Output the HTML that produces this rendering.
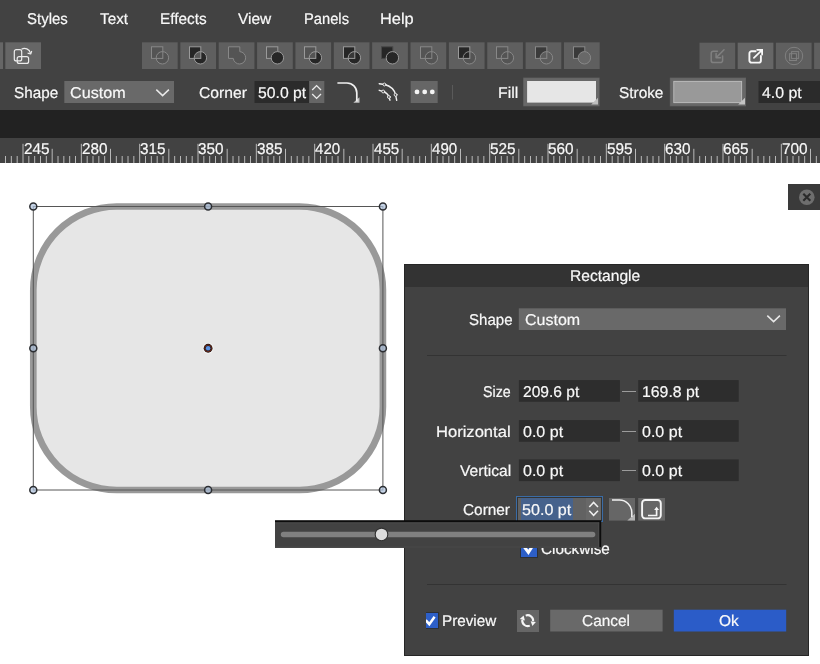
<!DOCTYPE html>
<html><head><meta charset="utf-8">
<style>
*{margin:0;padding:0;box-sizing:border-box}
html,body{width:820px;height:664px;overflow:hidden;background:#fff}
body{font-family:"Liberation Sans",sans-serif;color:#f0f0f0;font-size:15px;position:relative}
.a{position:absolute}
.t{position:absolute;white-space:nowrap;line-height:20px;height:20px;-webkit-text-stroke:0.2px currentColor;transform-origin:0 0;text-rendering:geometricPrecision}
svg{position:absolute;overflow:visible}
</style></head><body>
<div id="root" style="position:absolute;left:0;top:0;width:820px;height:664px;overflow:hidden;will-change:transform">

<div class="a" style="left:0px;top:0px;width:820px;height:110px;background:#424242;"></div>
<div class="a" style="left:0px;top:110px;width:820px;height:28px;background:#222;"></div>
<div class="a" style="left:0px;top:138px;width:820px;height:25px;background:#424242;"></div>
<span class="t" id="t0" style="left:26.98px;top:10px;font-size:15.6px;color:#f8f8f8;transform:scaleX(0.9600)">Styles</span>
<span class="t" id="t1" style="left:100.02px;top:10px;font-size:15.6px;color:#f8f8f8;transform:scaleX(0.9793)">Text</span>
<span class="t" id="t2" style="left:159.72px;top:10px;font-size:15.6px;color:#f8f8f8;transform:scaleX(0.9827)">Effects</span>
<span class="t" id="t3" style="left:238.22px;top:10px;font-size:15.6px;color:#f8f8f8;transform:scaleX(0.9932)">View</span>
<span class="t" id="t4" style="left:303.66px;top:10px;font-size:15.6px;color:#f8f8f8;transform:scaleX(0.9435)">Panels</span>
<span class="t" id="t5" style="left:380.45px;top:10px;font-size:15.6px;color:#f8f8f8;transform:scaleX(1.0508)">Help</span>
<svg style="left:0px;top:42px" width="3" height="27" viewBox="0 42 3 27"><rect x="0.00" y="42.30" width="3.00" height="26.70" fill="#666"/></svg>
<svg style="left:5px;top:42px" width="36" height="27" viewBox="5 42 36 27"><rect x="5.30" y="42.30" width="35.70" height="26.70" fill="#666"/></svg>
<svg style="left:5px;top:43px" width="36" height="26" viewBox="0 0 36 26" fill="none" stroke="#ececec" stroke-width="1.2">
<rect x="9.3" y="6.7" width="7.4" height="11.2" rx="2"/><rect x="12.2" y="13.6" width="11.4" height="6.8" rx="2"/>
<path d="M16.5 6.2 C20 4.3 24.3 6 25.6 10.3" /><path d="M22.6 10.2 L25.7 11 L26.7 8" stroke-linejoin="round"/>
</svg>
<svg style="left:142px;top:42px" width="36" height="27" viewBox="142 42 36 27"><rect x="142.00" y="42.30" width="35.70" height="26.70" fill="#5f5f5f"/></svg>
<svg style="left:180px;top:42px" width="37" height="27" viewBox="180 42 37 27"><rect x="180.36" y="42.30" width="35.70" height="26.70" fill="#5f5f5f"/></svg>
<svg style="left:218px;top:42px" width="37" height="27" viewBox="218 42 37 27"><rect x="218.72" y="42.30" width="35.70" height="26.70" fill="#5f5f5f"/></svg>
<svg style="left:257px;top:42px" width="36" height="27" viewBox="257 42 36 27"><rect x="257.08" y="42.30" width="35.70" height="26.70" fill="#5f5f5f"/></svg>
<svg style="left:295px;top:42px" width="37" height="27" viewBox="295 42 37 27"><rect x="295.44" y="42.30" width="35.70" height="26.70" fill="#5f5f5f"/></svg>
<svg style="left:333px;top:42px" width="37" height="27" viewBox="333 42 37 27"><rect x="333.80" y="42.30" width="35.70" height="26.70" fill="#5f5f5f"/></svg>
<svg style="left:372px;top:42px" width="36" height="27" viewBox="372 42 36 27"><rect x="372.16" y="42.30" width="35.70" height="26.70" fill="#5f5f5f"/></svg>
<svg style="left:410px;top:42px" width="37" height="27" viewBox="410 42 37 27"><rect x="410.52" y="42.30" width="35.70" height="26.70" fill="#5f5f5f"/></svg>
<svg style="left:448px;top:42px" width="37" height="27" viewBox="448 42 37 27"><rect x="448.88" y="42.30" width="35.70" height="26.70" fill="#5f5f5f"/></svg>
<svg style="left:487px;top:42px" width="36" height="27" viewBox="487 42 36 27"><rect x="487.24" y="42.30" width="35.70" height="26.70" fill="#5f5f5f"/></svg>
<svg style="left:525px;top:42px" width="37" height="27" viewBox="525 42 37 27"><rect x="525.60" y="42.30" width="35.70" height="26.70" fill="#5f5f5f"/></svg>
<svg style="left:563px;top:42px" width="37" height="27" viewBox="563 42 37 27"><rect x="563.96" y="42.30" width="35.70" height="26.70" fill="#5f5f5f"/></svg>
<svg style="left:142.0px;top:43px" width="36" height="26" viewBox="0 0 36 26"><defs><clipPath id="c142"><circle cx="20.4" cy="14.8" r="6.2"/></clipPath></defs><circle cx="20.4" cy="14.8" r="6.2" fill="#545454"/><rect x="9.5" y="3.8" width="11.3" height="11.6" fill="#545454"/><rect x="9.5" y="3.8" width="11.3" height="11.6" fill="none" stroke="#888" stroke-width="1"/><circle cx="20.4" cy="14.8" r="6.2" fill="none" stroke="#888" stroke-width="1"/></svg>
<svg style="left:180.36px;top:43px" width="36" height="26" viewBox="0 0 36 26"><defs><clipPath id="c180"><circle cx="20.4" cy="14.8" r="6.2"/></clipPath></defs><circle cx="20.4" cy="14.8" r="6.2" fill="#262626"/><rect x="9.5" y="3.8" width="11.3" height="11.6" fill="#262626"/><rect x="9.5" y="3.8" width="11.3" height="11.6" fill="#585858" clip-path="url(#c180)"/><rect x="9.5" y="3.8" width="11.3" height="11.6" fill="none" stroke="#9a9a9a" stroke-width="1"/><circle cx="20.4" cy="14.8" r="6.2" fill="none" stroke="#9a9a9a" stroke-width="1"/></svg>
<svg style="left:218.72px;top:43px" width="36" height="26" viewBox="0 0 36 26"><path d="M9.5 3.8 H20.8 V8.61 A6.2 6.2 0 1 1 14.27 15.4 H9.5 Z" fill="#545454" stroke="#888" stroke-width="1"/></svg>
<svg style="left:257.08px;top:43px" width="36" height="26" viewBox="0 0 36 26"><defs><clipPath id="c257"><circle cx="20.4" cy="14.8" r="6.2"/></clipPath></defs><rect x="9.5" y="3.8" width="11.3" height="11.6" fill="#545454"/><rect x="9.5" y="3.8" width="11.3" height="11.6" fill="none" stroke="#9a9a9a" stroke-width="1"/><circle cx="20.4" cy="14.8" r="6.2" fill="#262626"/><circle cx="20.4" cy="14.8" r="6.2" fill="none" stroke="#9a9a9a" stroke-width="1"/></svg>
<svg style="left:295.44px;top:43px" width="36" height="26" viewBox="0 0 36 26"><defs><clipPath id="c295"><circle cx="20.4" cy="14.8" r="6.2"/></clipPath></defs><rect x="9.5" y="3.8" width="11.3" height="11.6" fill="#545454"/><circle cx="20.4" cy="14.8" r="6.2" fill="#262626"/><rect x="9.5" y="3.8" width="11.3" height="11.6" fill="#545454" clip-path="url(#c295)"/><rect x="9.5" y="3.8" width="11.3" height="11.6" fill="none" stroke="#9a9a9a" stroke-width="1"/><circle cx="20.4" cy="14.8" r="6.2" fill="none" stroke="#9a9a9a" stroke-width="1"/></svg>
<svg style="left:333.8px;top:43px" width="36" height="26" viewBox="0 0 36 26"><defs><clipPath id="c333"><circle cx="20.4" cy="14.8" r="6.2"/></clipPath></defs><rect x="9.5" y="3.8" width="11.3" height="11.6" fill="#262626"/><circle cx="20.4" cy="14.8" r="6.2" fill="#262626"/><rect x="9.5" y="3.8" width="11.3" height="11.6" fill="#383838" clip-path="url(#c333)"/><rect x="9.5" y="3.8" width="11.3" height="11.6" fill="none" stroke="#9a9a9a" stroke-width="1"/><circle cx="20.4" cy="14.8" r="6.2" fill="none" stroke="#9a9a9a" stroke-width="1"/></svg>
<svg style="left:372.16px;top:43px" width="36" height="26" viewBox="0 0 36 26"><defs><clipPath id="c372"><circle cx="20.4" cy="14.8" r="6.2"/></clipPath></defs><rect x="9.5" y="3.8" width="11.3" height="11.6" fill="#262626"/><rect x="9.5" y="3.8" width="11.3" height="11.6" fill="none" stroke="#484848" stroke-width="1"/><circle cx="20.4" cy="14.8" r="6.2" fill="#262626"/><circle cx="20.4" cy="14.8" r="6.2" fill="none" stroke="#9a9a9a" stroke-width="1"/></svg>
<svg style="left:410.52px;top:43px" width="36" height="26" viewBox="0 0 36 26"><defs><clipPath id="c410"><circle cx="20.4" cy="14.8" r="6.2"/></clipPath></defs><rect x="9.5" y="3.8" width="11.3" height="11.6" fill="#545454"/><circle cx="20.4" cy="14.8" r="6.2" fill="#545454"/><rect x="9.5" y="3.8" width="11.3" height="11.6" fill="#505050" clip-path="url(#c410)"/><rect x="9.5" y="3.8" width="11.3" height="11.6" fill="none" stroke="#888" stroke-width="1"/><circle cx="20.4" cy="14.8" r="6.2" fill="none" stroke="#888" stroke-width="1"/></svg>
<svg style="left:448.88px;top:43px" width="36" height="26" viewBox="0 0 36 26"><defs><clipPath id="c448"><circle cx="20.4" cy="14.8" r="6.2"/></clipPath></defs><circle cx="20.4" cy="14.8" r="6.2" fill="#545454"/><rect x="9.5" y="3.8" width="11.3" height="11.6" fill="#262626"/><rect x="9.5" y="3.8" width="11.3" height="11.6" fill="#262626" clip-path="url(#c448)"/><rect x="9.5" y="3.8" width="11.3" height="11.6" fill="none" stroke="#9a9a9a" stroke-width="1"/><circle cx="20.4" cy="14.8" r="6.2" fill="none" stroke="#888" stroke-width="1"/></svg>
<svg style="left:487.24px;top:43px" width="36" height="26" viewBox="0 0 36 26"><defs><clipPath id="c487"><circle cx="20.4" cy="14.8" r="6.2"/></clipPath></defs><rect x="9.5" y="3.8" width="11.3" height="11.6" fill="#545454"/><circle cx="20.4" cy="14.8" r="6.2" fill="#545454"/><rect x="9.5" y="3.8" width="11.3" height="11.6" fill="none" stroke="#888" stroke-width="1"/><circle cx="20.4" cy="14.8" r="6.2" fill="none" stroke="#888" stroke-width="1"/></svg>
<svg style="left:525.6px;top:43px" width="36" height="26" viewBox="0 0 36 26"><defs><clipPath id="c525"><circle cx="20.4" cy="14.8" r="6.2"/></clipPath></defs><rect x="9.5" y="3.8" width="11.3" height="11.6" fill="#3a3a3a"/><circle cx="20.4" cy="14.8" r="6.2" fill="#5c5c5c"/><rect x="9.5" y="3.8" width="11.3" height="11.6" fill="none" stroke="#888" stroke-width="1"/><circle cx="20.4" cy="14.8" r="6.2" fill="none" stroke="#888" stroke-width="1"/></svg>
<svg style="left:563.96px;top:43px" width="36" height="26" viewBox="0 0 36 26"><defs><clipPath id="c563"><circle cx="20.4" cy="14.8" r="6.2"/></clipPath></defs><rect x="9.5" y="3.8" width="11.3" height="11.6" fill="#3a3a3a"/><rect x="9.5" y="3.8" width="11.3" height="11.6" fill="none" stroke="#888" stroke-width="1"/><circle cx="20.4" cy="14.8" r="6.2" fill="#686868"/><circle cx="20.4" cy="14.8" r="6.2" fill="none" stroke="#888" stroke-width="1"/></svg>
<svg style="left:699px;top:42px" width="37" height="27" viewBox="699 42 37 27"><rect x="699.50" y="42.70" width="35.70" height="26.30" fill="#5f5f5f"/></svg>
<svg style="left:737px;top:42px" width="37" height="27" viewBox="737 42 37 27"><rect x="737.70" y="42.70" width="35.70" height="26.30" fill="#666"/></svg>
<svg style="left:775px;top:42px" width="37" height="27" viewBox="775 42 37 27"><rect x="775.90" y="42.70" width="35.70" height="26.30" fill="#5f5f5f"/></svg>
<svg style="left:814px;top:42px" width="36" height="27" viewBox="814 42 36 27"><rect x="814.10" y="42.70" width="35.70" height="26.30" fill="#5f5f5f"/></svg>
<svg style="left:699.5px;top:43px" width="36" height="26" viewBox="0 0 36 26" fill="none" stroke="#808080" stroke-width="1.5" stroke-linecap="round" stroke-linejoin="round">
<path d="M17.4 8.3 H13.4 A2.2 2.2 0 0 0 11.2 10.5 V17.4 A2.2 2.2 0 0 0 13.4 19.6 H20.4 A2.2 2.2 0 0 0 22.6 17.4 V13"/>
<path d="M24 6.8 L16.4 14.5 M16.1 10.4 V14.8 H20.5"/></svg>
<svg style="left:737.7px;top:43px" width="36" height="26" viewBox="0 0 36 26" fill="none" stroke="#f8f8f8" stroke-width="1.9" stroke-linecap="round" stroke-linejoin="round">
<path d="M17.6 8.3 H13.6 A2.2 2.2 0 0 0 11.4 10.5 V17.4 A2.2 2.2 0 0 0 13.6 19.6 H20.7 A2.2 2.2 0 0 0 22.9 17.4 V13"/>
<path d="M15.9 14.9 L23.4 7.6" stroke-width="1.7"/><path d="M19.2 6.8 H24.1 V11.6" stroke-width="1.8" stroke-linejoin="miter"/><path d="M21 6.8 H24.1 V9.9 Z" fill="#f8f8f8" stroke="none"/></svg>
<svg style="left:775.9px;top:43px" width="36" height="26" viewBox="0 0 36 26" fill="none" stroke="#808080" stroke-width="1">
<circle cx="18" cy="13" r="8.7"/><rect x="15.6" y="10.7" width="4.8" height="4.5" fill="#565656" stroke="none"/><rect x="15.6" y="8.6" width="7" height="6.8"/><rect x="13.6" y="10.7" width="6.8" height="6.8"/></svg>
<span class="t" id="t6" style="left:14.37px;top:84px;font-size:15.6px;color:#f8f8f8;transform:scaleX(0.9785)">Shape</span>
<svg style="left:64px;top:81px" width="110" height="22" viewBox="64 81 110 22"><rect x="64.30" y="81.00" width="109.70" height="22.00" fill="#696969"/></svg>
<span class="t" id="t7" style="left:70.22px;top:84px;font-size:15.6px;color:#f8f8f8;transform:scaleX(1.0354)">Custom</span>
<svg style="left:155px;top:88px" width="16" height="10" viewBox="0 0 16 10" fill="none" stroke="#e8e8e8" stroke-width="1.5"><path d="M1.3 1.6 L7.6 7.6 L13.9 1.6"/></svg>
<span class="t" id="t8" style="left:199.44px;top:84px;font-size:15.6px;color:#f8f8f8;transform:scaleX(1.0049)">Corner</span>
<svg style="left:254px;top:81px" width="56" height="22" viewBox="254 81 56 22"><rect x="254.50" y="81.00" width="54.70" height="22.00" fill="#2b2b2b"/></svg>
<svg style="left:309px;top:81px" width="16" height="22" viewBox="309 81 16 22"><rect x="309.20" y="81.00" width="15.10" height="22.00" fill="#666"/></svg>
<span class="t" id="t9" style="left:257.98px;top:84px;font-size:15.6px;color:#f8f8f8;transform:scaleX(1.0093)">50.0 pt</span>
<svg style="left:309.2px;top:81px" width="15" height="22" viewBox="0 0 15 22" fill="none" stroke="#ececec" stroke-width="1.3"><path d="M3.2 9 L7.6 4.6 L12 9 M3.2 13 L7.6 17.4 L12 13"/></svg>
<svg style="left:330px;top:78px" width="36" height="30" viewBox="0 0 36 30" fill="none">
<path d="M23.3 24.8 H29.5 V19.2 Z" fill="#c4c4c4"/>
<path d="M7.4 5 H17 A9.8 9.8 0 0 1 26.8 14.8 V23.6" stroke="#f0f0f0" stroke-width="1.7"/></svg>
<svg style="left:370px;top:78px" width="36" height="30" viewBox="0 0 36 30" fill="none" stroke="#f0f0f0" stroke-width="1.4" stroke-linecap="round">
<path d="M9.2 5.7 L14.5 6.5 C20.5 8 24.5 12 25.6 16.8 L26.7 22.4"/><path d="M9.2 12.3 L13.2 13.5 C16 14.6 18.2 16.6 18.9 19 L20 22.2"/>
<g fill="#4a4a4a" stroke-width="0.9"><circle cx="14.5" cy="6.5" r="1.45"/><circle cx="25.6" cy="16.8" r="1.45"/><circle cx="13.2" cy="13.5" r="1.45"/><circle cx="18.9" cy="19" r="1.45"/></g></svg>
<svg style="left:410px;top:81px" width="28" height="22" viewBox="410 81 28 22"><rect x="410.70" y="81.00" width="27.00" height="22.00" fill="#666"/></svg>
<svg style="left:410.7px;top:81px" width="27" height="22" viewBox="0 0 27 22" fill="#f4f4f4"><circle cx="6" cy="10.9" r="2.4"/><circle cx="13.7" cy="10.9" r="2.4"/><circle cx="21.3" cy="10.9" r="2.4"/></svg>
<svg style="left:452px;top:85px" width="1" height="15" viewBox="452 85 1 15"><rect x="452.00" y="85.00" width="1.00" height="14.50" fill="#5a5a5a"/></svg>
<span class="t" id="t10" style="left:497.69px;top:84px;font-size:15.6px;color:#f8f8f8;transform:scaleX(1.0111)">Fill</span>
<svg style="left:523px;top:77px" width="77" height="30" viewBox="523 77 77 30"><rect x="523.20" y="77.60" width="76.40" height="28.70" fill="#606060"/></svg>
<svg style="left:523px;top:78px" width="76" height="28" viewBox="523 78 76 28"><rect x="523.80" y="78.20" width="75.20" height="27.50" fill="#686868"/></svg>
<svg style="left:527px;top:81px" width="69" height="22" viewBox="527 81 69 22"><rect x="527.10" y="81.00" width="68.90" height="21.60" fill="#e6e6e6"/></svg>
<svg style="left:590px;top:96px" width="10" height="10" viewBox="0 0 10 10"><path d="M1.2 8.6 H8 V1.8 Z" fill="#bebebe"/></svg>
<span class="t" id="t11" style="left:618.87px;top:84px;font-size:15.6px;color:#f8f8f8;transform:scaleX(0.9853)">Stroke</span>
<svg style="left:669px;top:77px" width="77" height="30" viewBox="669 77 77 30"><rect x="669.80" y="77.60" width="76.20" height="28.70" fill="#606060"/></svg>
<svg style="left:670px;top:78px" width="76" height="28" viewBox="670 78 76 28"><rect x="670.40" y="78.20" width="75.00" height="27.50" fill="#686868"/></svg>
<svg style="left:673px;top:80px" width="70" height="24" viewBox="673 80 70 24"><rect x="673.30" y="80.90" width="68.80" height="22.20" fill="#bcbcbc"/></svg>
<svg style="left:674px;top:81px" width="68" height="22" viewBox="674 81 68 22"><rect x="674.20" y="81.80" width="67.00" height="20.40" fill="#999"/></svg>
<svg style="left:736.5px;top:96px" width="10" height="10" viewBox="0 0 10 10"><path d="M1.2 8.6 H8 V1.8 Z" fill="#c4c4c4"/></svg>
<svg style="left:758px;top:81px" width="63" height="22" viewBox="758 81 63 22"><rect x="758.50" y="81.00" width="62.00" height="22.00" fill="#2b2b2b"/></svg>
<span class="t" id="t12" style="left:762.19px;top:84px;font-size:15.6px;color:#f8f8f8;transform:scaleX(1.0156)">4.0 pt</span>
<svg style="left:0;top:138px" width="820" height="25" viewBox="0 0 820 25"><rect x="5.00" y="18" width="1" height="7" fill="#b8b8b8"/><rect x="10.83" y="18" width="1" height="7" fill="#b8b8b8"/><rect x="16.67" y="18" width="1" height="7" fill="#b8b8b8"/><rect x="22.50" y="5.8" width="1" height="19.2" fill="#b8b8b8"/><rect x="28.33" y="18" width="1" height="7" fill="#b8b8b8"/><rect x="34.17" y="18" width="1" height="7" fill="#b8b8b8"/><rect x="40.00" y="18" width="1" height="7" fill="#b8b8b8"/><rect x="45.83" y="18" width="1" height="7" fill="#b8b8b8"/><rect x="51.67" y="10.8" width="1" height="14.2" fill="#b8b8b8"/><rect x="57.50" y="18" width="1" height="7" fill="#b8b8b8"/><rect x="63.33" y="18" width="1" height="7" fill="#b8b8b8"/><rect x="69.17" y="18" width="1" height="7" fill="#b8b8b8"/><rect x="75.00" y="18" width="1" height="7" fill="#b8b8b8"/><rect x="80.83" y="5.8" width="1" height="19.2" fill="#b8b8b8"/><rect x="86.67" y="18" width="1" height="7" fill="#b8b8b8"/><rect x="92.50" y="18" width="1" height="7" fill="#b8b8b8"/><rect x="98.33" y="18" width="1" height="7" fill="#b8b8b8"/><rect x="104.17" y="18" width="1" height="7" fill="#b8b8b8"/><rect x="110.00" y="10.8" width="1" height="14.2" fill="#b8b8b8"/><rect x="115.83" y="18" width="1" height="7" fill="#b8b8b8"/><rect x="121.67" y="18" width="1" height="7" fill="#b8b8b8"/><rect x="127.50" y="18" width="1" height="7" fill="#b8b8b8"/><rect x="133.33" y="18" width="1" height="7" fill="#b8b8b8"/><rect x="139.17" y="5.8" width="1" height="19.2" fill="#b8b8b8"/><rect x="145.00" y="18" width="1" height="7" fill="#b8b8b8"/><rect x="150.83" y="18" width="1" height="7" fill="#b8b8b8"/><rect x="156.67" y="18" width="1" height="7" fill="#b8b8b8"/><rect x="162.50" y="18" width="1" height="7" fill="#b8b8b8"/><rect x="168.33" y="10.8" width="1" height="14.2" fill="#b8b8b8"/><rect x="174.17" y="18" width="1" height="7" fill="#b8b8b8"/><rect x="180.00" y="18" width="1" height="7" fill="#b8b8b8"/><rect x="185.83" y="18" width="1" height="7" fill="#b8b8b8"/><rect x="191.67" y="18" width="1" height="7" fill="#b8b8b8"/><rect x="197.50" y="5.8" width="1" height="19.2" fill="#b8b8b8"/><rect x="203.33" y="18" width="1" height="7" fill="#b8b8b8"/><rect x="209.17" y="18" width="1" height="7" fill="#b8b8b8"/><rect x="215.00" y="18" width="1" height="7" fill="#b8b8b8"/><rect x="220.83" y="18" width="1" height="7" fill="#b8b8b8"/><rect x="226.67" y="10.8" width="1" height="14.2" fill="#b8b8b8"/><rect x="232.50" y="18" width="1" height="7" fill="#b8b8b8"/><rect x="238.33" y="18" width="1" height="7" fill="#b8b8b8"/><rect x="244.17" y="18" width="1" height="7" fill="#b8b8b8"/><rect x="250.00" y="18" width="1" height="7" fill="#b8b8b8"/><rect x="255.83" y="5.8" width="1" height="19.2" fill="#b8b8b8"/><rect x="261.67" y="18" width="1" height="7" fill="#b8b8b8"/><rect x="267.50" y="18" width="1" height="7" fill="#b8b8b8"/><rect x="273.33" y="18" width="1" height="7" fill="#b8b8b8"/><rect x="279.17" y="18" width="1" height="7" fill="#b8b8b8"/><rect x="285.00" y="10.8" width="1" height="14.2" fill="#b8b8b8"/><rect x="290.83" y="18" width="1" height="7" fill="#b8b8b8"/><rect x="296.67" y="18" width="1" height="7" fill="#b8b8b8"/><rect x="302.50" y="18" width="1" height="7" fill="#b8b8b8"/><rect x="308.33" y="18" width="1" height="7" fill="#b8b8b8"/><rect x="314.17" y="5.8" width="1" height="19.2" fill="#b8b8b8"/><rect x="320.00" y="18" width="1" height="7" fill="#b8b8b8"/><rect x="325.83" y="18" width="1" height="7" fill="#b8b8b8"/><rect x="331.67" y="18" width="1" height="7" fill="#b8b8b8"/><rect x="337.50" y="18" width="1" height="7" fill="#b8b8b8"/><rect x="343.33" y="10.8" width="1" height="14.2" fill="#b8b8b8"/><rect x="349.17" y="18" width="1" height="7" fill="#b8b8b8"/><rect x="355.00" y="18" width="1" height="7" fill="#b8b8b8"/><rect x="360.83" y="18" width="1" height="7" fill="#b8b8b8"/><rect x="366.67" y="18" width="1" height="7" fill="#b8b8b8"/><rect x="372.50" y="5.8" width="1" height="19.2" fill="#b8b8b8"/><rect x="378.33" y="18" width="1" height="7" fill="#b8b8b8"/><rect x="384.17" y="18" width="1" height="7" fill="#b8b8b8"/><rect x="390.00" y="18" width="1" height="7" fill="#b8b8b8"/><rect x="395.83" y="18" width="1" height="7" fill="#b8b8b8"/><rect x="401.67" y="10.8" width="1" height="14.2" fill="#b8b8b8"/><rect x="407.50" y="18" width="1" height="7" fill="#b8b8b8"/><rect x="413.33" y="18" width="1" height="7" fill="#b8b8b8"/><rect x="419.17" y="18" width="1" height="7" fill="#b8b8b8"/><rect x="425.00" y="18" width="1" height="7" fill="#b8b8b8"/><rect x="430.83" y="5.8" width="1" height="19.2" fill="#b8b8b8"/><rect x="436.67" y="18" width="1" height="7" fill="#b8b8b8"/><rect x="442.50" y="18" width="1" height="7" fill="#b8b8b8"/><rect x="448.33" y="18" width="1" height="7" fill="#b8b8b8"/><rect x="454.17" y="18" width="1" height="7" fill="#b8b8b8"/><rect x="460.00" y="10.8" width="1" height="14.2" fill="#b8b8b8"/><rect x="465.83" y="18" width="1" height="7" fill="#b8b8b8"/><rect x="471.67" y="18" width="1" height="7" fill="#b8b8b8"/><rect x="477.50" y="18" width="1" height="7" fill="#b8b8b8"/><rect x="483.33" y="18" width="1" height="7" fill="#b8b8b8"/><rect x="489.17" y="5.8" width="1" height="19.2" fill="#b8b8b8"/><rect x="495.00" y="18" width="1" height="7" fill="#b8b8b8"/><rect x="500.83" y="18" width="1" height="7" fill="#b8b8b8"/><rect x="506.67" y="18" width="1" height="7" fill="#b8b8b8"/><rect x="512.50" y="18" width="1" height="7" fill="#b8b8b8"/><rect x="518.33" y="10.8" width="1" height="14.2" fill="#b8b8b8"/><rect x="524.17" y="18" width="1" height="7" fill="#b8b8b8"/><rect x="530.00" y="18" width="1" height="7" fill="#b8b8b8"/><rect x="535.83" y="18" width="1" height="7" fill="#b8b8b8"/><rect x="541.67" y="18" width="1" height="7" fill="#b8b8b8"/><rect x="547.50" y="5.8" width="1" height="19.2" fill="#b8b8b8"/><rect x="553.33" y="18" width="1" height="7" fill="#b8b8b8"/><rect x="559.17" y="18" width="1" height="7" fill="#b8b8b8"/><rect x="565.00" y="18" width="1" height="7" fill="#b8b8b8"/><rect x="570.83" y="18" width="1" height="7" fill="#b8b8b8"/><rect x="576.67" y="10.8" width="1" height="14.2" fill="#b8b8b8"/><rect x="582.50" y="18" width="1" height="7" fill="#b8b8b8"/><rect x="588.33" y="18" width="1" height="7" fill="#b8b8b8"/><rect x="594.17" y="18" width="1" height="7" fill="#b8b8b8"/><rect x="600.00" y="18" width="1" height="7" fill="#b8b8b8"/><rect x="605.83" y="5.8" width="1" height="19.2" fill="#b8b8b8"/><rect x="611.67" y="18" width="1" height="7" fill="#b8b8b8"/><rect x="617.50" y="18" width="1" height="7" fill="#b8b8b8"/><rect x="623.33" y="18" width="1" height="7" fill="#b8b8b8"/><rect x="629.17" y="18" width="1" height="7" fill="#b8b8b8"/><rect x="635.00" y="10.8" width="1" height="14.2" fill="#b8b8b8"/><rect x="640.83" y="18" width="1" height="7" fill="#b8b8b8"/><rect x="646.67" y="18" width="1" height="7" fill="#b8b8b8"/><rect x="652.50" y="18" width="1" height="7" fill="#b8b8b8"/><rect x="658.33" y="18" width="1" height="7" fill="#b8b8b8"/><rect x="664.17" y="5.8" width="1" height="19.2" fill="#b8b8b8"/><rect x="670.00" y="18" width="1" height="7" fill="#b8b8b8"/><rect x="675.83" y="18" width="1" height="7" fill="#b8b8b8"/><rect x="681.67" y="18" width="1" height="7" fill="#b8b8b8"/><rect x="687.50" y="18" width="1" height="7" fill="#b8b8b8"/><rect x="693.33" y="10.8" width="1" height="14.2" fill="#b8b8b8"/><rect x="699.17" y="18" width="1" height="7" fill="#b8b8b8"/><rect x="705.00" y="18" width="1" height="7" fill="#b8b8b8"/><rect x="710.83" y="18" width="1" height="7" fill="#b8b8b8"/><rect x="716.67" y="18" width="1" height="7" fill="#b8b8b8"/><rect x="722.50" y="5.8" width="1" height="19.2" fill="#b8b8b8"/><rect x="728.33" y="18" width="1" height="7" fill="#b8b8b8"/><rect x="734.17" y="18" width="1" height="7" fill="#b8b8b8"/><rect x="740.00" y="18" width="1" height="7" fill="#b8b8b8"/><rect x="745.83" y="18" width="1" height="7" fill="#b8b8b8"/><rect x="751.67" y="10.8" width="1" height="14.2" fill="#b8b8b8"/><rect x="757.50" y="18" width="1" height="7" fill="#b8b8b8"/><rect x="763.33" y="18" width="1" height="7" fill="#b8b8b8"/><rect x="769.17" y="18" width="1" height="7" fill="#b8b8b8"/><rect x="775.00" y="18" width="1" height="7" fill="#b8b8b8"/><rect x="780.83" y="5.8" width="1" height="19.2" fill="#b8b8b8"/><rect x="786.67" y="18" width="1" height="7" fill="#b8b8b8"/><rect x="792.50" y="18" width="1" height="7" fill="#b8b8b8"/><rect x="798.33" y="18" width="1" height="7" fill="#b8b8b8"/><rect x="804.17" y="18" width="1" height="7" fill="#b8b8b8"/><rect x="810.00" y="10.8" width="1" height="14.2" fill="#b8b8b8"/><rect x="815.83" y="18" width="1" height="7" fill="#b8b8b8"/></svg>
<span class="t" id="t13" style="left:23.50px;top:140px;font-size:15.6px;color:#f8f8f8;transform:scaleX(0.9811)">245</span>
<span class="t" id="t14" style="left:81.83px;top:140px;font-size:15.6px;color:#f8f8f8;transform:scaleX(0.9788)">280</span>
<span class="t" id="t15" style="left:140.12px;top:140px;font-size:15.6px;color:#f8f8f8;transform:scaleX(0.9827)">315</span>
<span class="t" id="t16" style="left:198.46px;top:140px;font-size:15.6px;color:#f8f8f8;transform:scaleX(0.9804)">350</span>
<span class="t" id="t17" style="left:256.79px;top:140px;font-size:15.6px;color:#f8f8f8;transform:scaleX(0.9827)">385</span>
<span class="t" id="t18" style="left:315.46px;top:140px;font-size:15.6px;color:#f8f8f8;transform:scaleX(0.9671)">420</span>
<span class="t" id="t19" style="left:373.80px;top:140px;font-size:15.6px;color:#f8f8f8;transform:scaleX(0.9694)">455</span>
<span class="t" id="t20" style="left:432.13px;top:140px;font-size:15.6px;color:#f8f8f8;transform:scaleX(0.9671)">490</span>
<span class="t" id="t21" style="left:490.05px;top:140px;font-size:15.6px;color:#f8f8f8;transform:scaleX(0.9854)">525</span>
<span class="t" id="t22" style="left:548.39px;top:140px;font-size:15.6px;color:#f8f8f8;transform:scaleX(0.9831)">560</span>
<span class="t" id="t23" style="left:606.72px;top:140px;font-size:15.6px;color:#f8f8f8;transform:scaleX(0.9854)">595</span>
<span class="t" id="t24" style="left:665.09px;top:140px;font-size:15.6px;color:#f8f8f8;transform:scaleX(0.9819)">630</span>
<span class="t" id="t25" style="left:723.42px;top:140px;font-size:15.6px;color:#f8f8f8;transform:scaleX(0.9843)">665</span>
<span class="t" id="t26" style="left:781.70px;top:140px;font-size:15.6px;color:#f8f8f8;transform:scaleX(0.9841)">700</span>
<svg style="left:0;top:163px" width="820" height="501" viewBox="0 163 820 501">
<rect x="33.30" y="206.50" width="349.60" height="283.50" rx="83.36" fill="#e6e6e6" stroke="#999" stroke-width="6.67"/>
<rect x="33.30" y="206.50" width="349.60" height="283.50" fill="none" stroke="#565656" stroke-width="1"/>
<circle cx="33.30" cy="206.50" r="3.5" fill="#afc3dd" fill-opacity="0.73" stroke="#2c2e32" stroke-width="1.5"/>
<circle cx="33.30" cy="348.25" r="3.5" fill="#afc3dd" fill-opacity="0.73" stroke="#2c2e32" stroke-width="1.5"/>
<circle cx="33.30" cy="490.00" r="3.5" fill="#afc3dd" fill-opacity="0.73" stroke="#2c2e32" stroke-width="1.5"/>
<circle cx="208.10" cy="206.50" r="3.5" fill="#afc3dd" fill-opacity="0.73" stroke="#2c2e32" stroke-width="1.5"/>
<circle cx="208.10" cy="348.25" r="5.6" fill="#fff" opacity="0.45"/><circle cx="208.10" cy="348.25" r="4.4" fill="#1c0f0c"/><circle cx="208.10" cy="348.25" r="3.7" fill="#6a2a1a"/><circle cx="208.10" cy="348.25" r="2.8" fill="#1c1820"/><circle cx="208.10" cy="348.25" r="2.3" fill="#5a92e2"/>
<circle cx="208.10" cy="490.00" r="3.5" fill="#afc3dd" fill-opacity="0.73" stroke="#2c2e32" stroke-width="1.5"/>
<circle cx="382.90" cy="206.50" r="3.5" fill="#afc3dd" fill-opacity="0.73" stroke="#2c2e32" stroke-width="1.5"/>
<circle cx="382.90" cy="348.25" r="3.5" fill="#afc3dd" fill-opacity="0.73" stroke="#2c2e32" stroke-width="1.5"/>
<circle cx="382.90" cy="490.00" r="3.5" fill="#afc3dd" fill-opacity="0.73" stroke="#2c2e32" stroke-width="1.5"/>
</svg>
<div class="a" style="left:788px;top:184px;width:32px;height:26px;background:#3a3a3a;"></div>
<svg style="left:788px;top:184px" width="32" height="26" viewBox="0 0 32 26"><circle cx="18.8" cy="13.3" r="7.8" fill="#6e6e6e"/><path d="M15.3 9.8 L22.3 16.8 M22.3 9.8 L15.3 16.8" stroke="#2a2a2a" stroke-width="2.1" fill="none"/></svg>
<div class="a" style="left:404px;top:264px;width:405px;height:392px;background:#424242;"></div>
<div class="a" style="left:404px;top:264px;width:405px;height:23px;background:#333;"></div>
<div class="a" style="left:404px;top:264px;width:405px;height:392px;background:transparent;border:1px solid #262626"></div>
<span class="t" id="t27" style="left:569.50px;top:267px;font-size:15.6px;color:#f8f8f8;transform:scaleX(1.0001)">Rectangle</span>
<span class="t" id="t28" style="left:468.78px;top:311px;font-size:15.6px;color:#f8f8f8;transform:scaleX(0.9650)">Shape</span>
<svg style="left:518px;top:308px" width="268" height="22" viewBox="518 308 268 22"><rect x="518.80" y="308.30" width="267.20" height="21.70" fill="#696969"/></svg>
<span class="t" id="t29" style="left:524.63px;top:311px;font-size:15.6px;color:#f8f8f8;transform:scaleX(1.0259)">Custom</span>
<svg style="left:766px;top:314px" width="16" height="10" viewBox="0 0 16 10" fill="none" stroke="#e8e8e8" stroke-width="1.5"><path d="M1.3 1.6 L7.6 7.6 L13.9 1.6"/></svg>
<svg style="left:427px;top:355px" width="360" height="1" viewBox="427 355 360 1"><rect x="427.00" y="355.00" width="359.50" height="1.00" fill="#333"/></svg>
<span class="t" id="t30" style="left:482.91px;top:383px;font-size:15.6px;color:#f8f8f8;transform:scaleX(0.9131)">Size</span>
<svg style="left:518px;top:380px" width="102" height="22" viewBox="518 380 102 22"><rect x="518.90" y="380.10" width="101.00" height="21.70" fill="#2d2d2d"/></svg>
<svg style="left:638px;top:380px" width="101" height="22" viewBox="638 380 101 22"><rect x="638.20" y="380.10" width="100.50" height="21.70" fill="#2d2d2d"/></svg>
<div class="a" style="left:622px;top:391px;width:14px;height:1px;background:#9c9c9c;"></div>
<span class="t" id="t31" style="left:523.29px;top:383px;font-size:15.6px;color:#f8f8f8;transform:scaleX(0.9982)">209.6 pt</span>
<span class="t" id="t32" style="left:641.89px;top:383px;font-size:15.6px;color:#f8f8f8;transform:scaleX(1.0142)">169.8 pt</span>
<span class="t" id="t33" style="left:436.44px;top:423px;font-size:15.6px;color:#f8f8f8;transform:scaleX(1.0622)">Horizontal</span>
<svg style="left:518px;top:420px" width="102" height="22" viewBox="518 420 102 22"><rect x="518.90" y="420.10" width="101.00" height="21.70" fill="#2d2d2d"/></svg>
<svg style="left:638px;top:420px" width="101" height="22" viewBox="638 420 101 22"><rect x="638.20" y="420.10" width="100.50" height="21.70" fill="#2d2d2d"/></svg>
<div class="a" style="left:622px;top:431px;width:14px;height:1px;background:#9c9c9c;"></div>
<span class="t" id="t34" style="left:522.92px;top:423px;font-size:15.6px;color:#f8f8f8;transform:scaleX(1.0278)">0.0 pt</span>
<span class="t" id="t35" style="left:642.22px;top:423px;font-size:15.6px;color:#f8f8f8;transform:scaleX(1.0278)">0.0 pt</span>
<span class="t" id="t36" style="left:459.71px;top:462px;font-size:15.6px;color:#f8f8f8;transform:scaleX(1.0009)">Vertical</span>
<svg style="left:518px;top:459px" width="102" height="23" viewBox="518 459 102 23"><rect x="518.90" y="459.40" width="101.00" height="21.70" fill="#2d2d2d"/></svg>
<svg style="left:638px;top:459px" width="101" height="23" viewBox="638 459 101 23"><rect x="638.20" y="459.40" width="100.50" height="21.70" fill="#2d2d2d"/></svg>
<div class="a" style="left:622px;top:470px;width:14px;height:1px;background:#9c9c9c;"></div>
<span class="t" id="t37" style="left:522.92px;top:462px;font-size:15.6px;color:#f8f8f8;transform:scaleX(1.0278)">0.0 pt</span>
<span class="t" id="t38" style="left:642.22px;top:462px;font-size:15.6px;color:#f8f8f8;transform:scaleX(1.0278)">0.0 pt</span>
<span class="t" id="t39" style="left:463.15px;top:501px;font-size:15.6px;color:#f8f8f8;transform:scaleX(0.9859)">Corner</span>
<div class="a" style="left:516px;top:496px;width:87px;height:26px;background:#343434;border:1px solid #3a6ca6"></div>
<div class="a" style="left:518px;top:498px;width:68px;height:23px;background:#626262;"></div>
<div class="a" style="left:586px;top:498px;width:15px;height:23px;background:#686868;"></div>
<svg style="left:521px;top:498px" width="52" height="23" viewBox="521 498 52 23"><rect x="521.00" y="498.00" width="52.00" height="22.40" fill="#46628c"/></svg>
<span class="t" id="t40" style="left:521.96px;top:501px;font-size:15.6px;color:#f8f8f8;transform:scaleX(1.0325)">50.0 pt</span>
<svg style="left:586px;top:497px" width="16" height="23" viewBox="0 0 16 23" fill="none" stroke="#f0f0f0" stroke-width="1.5"><path d="M3.3 10 L7.6 5.4 L12 10 M3.3 13.7 L7.6 18.3 L12 13.7"/></svg>
<svg style="left:609px;top:498px" width="26" height="23" viewBox="609 498 26 23"><rect x="609.00" y="498.00" width="26.00" height="22.60" fill="#666"/></svg>
<svg style="left:609px;top:498px" width="26" height="23" viewBox="0 0 26 23" fill="none">
<path d="M18.3 22.6 H26 V15.7 Z" fill="#b4b4b4"/>
<path d="M3 2.1 H10.4 A12.4 12.4 0 0 1 22.8 14.5 V19" stroke="#f2f2f2" stroke-width="1.5"/></svg>
<svg style="left:638px;top:498px" width="27" height="23" viewBox="638 498 27 23"><rect x="638.20" y="498.00" width="26.80" height="22.60" fill="#666"/></svg>
<svg style="left:638.1px;top:498px" width="27" height="23" viewBox="0 0 27 23" fill="none" stroke="#f6f6f6" stroke-width="1.9">
<rect x="4.1" y="2" width="18.7" height="18.4" rx="3.2"/>
<path d="M10 17.5 H18.6 V11.5" stroke-width="1.7"/><path d="M16.1 12 L18.6 8.7 L21.1 12 Z" fill="#f6f6f6" stroke="none"/></svg>
<div class="a" style="left:520px;top:540px;width:18px;height:18px;background:#2d5fc8;border:1px solid #2c3038"></div>
<svg style="left:520px;top:540px" width="18" height="18" viewBox="0 0 18 18" fill="none" stroke="#fff" stroke-width="3"><path d="M3.7 6 L8.4 12.3 L14.4 3"/></svg>
<span class="t" id="t41" style="left:540.85px;top:540px;font-size:15.6px;color:#f8f8f8;transform:scaleX(0.9808)">Clockwise</span>
<svg style="left:270px;top:515px" width="340" height="40" viewBox="270 515 340 40">
<rect x="275" y="520.2" width="326.2" height="27.5" fill="#0c0c0c"/>
<rect x="275" y="522.4" width="324.2" height="25.3" fill="#424242"/>
<rect x="275" y="522.4" width="324.2" height="1" fill="#4c4c4c"/><rect x="598.2" y="522.4" width="1" height="25.3" fill="#4c4c4c"/><rect x="275" y="546.7" width="324.2" height="1" fill="#4c4c4c"/>
<rect x="280.8" y="531.7" width="314.5" height="5.5" rx="2.75" fill="#808080"/>
<circle cx="381.5" cy="534.4" r="6.3" fill="#dcdcdc" stroke="#303030" stroke-width="1.1"/>
</svg>
<svg style="left:427px;top:584px" width="360" height="1" viewBox="427 584 360 1"><rect x="427.00" y="584.00" width="359.50" height="1.00" fill="#333"/></svg>
<div class="a" style="left:426px;top:612px;width:13px;height:17px;background:#2d5fc8;border:1px solid #2c3038;border-left:none"></div>
<svg style="left:426px;top:612px;overflow:hidden" width="12" height="17" viewBox="-0.3 -0.5 12 17" fill="none" stroke="#fff" stroke-width="2.5"><path d="M-0.6 7.7 L3 11.7 L8.3 4.3"/></svg>
<span class="t" id="t42" style="left:442.12px;top:612px;font-size:15.6px;color:#f8f8f8;transform:scaleX(0.9778)">Preview</span>
<div class="a" style="left:517px;top:610px;width:22px;height:22px;background:#666;"></div>
<svg style="left:517px;top:610px" width="22" height="22" viewBox="0 0 22 22" fill="none" stroke="#f6f6f6" stroke-width="2.1">
<path d="M8.7 5.6 A5.4 5.4 0 0 1 16.1 11.2"/><path d="M12.8 15.6 A5.4 5.4 0 0 1 5.3 10"/>
<path d="M13.7 11.3 L18.9 11.9 L15.4 15.9 Z" fill="#f6f6f6" stroke="none"/><path d="M7.9 10.5 L2.8 8.9 L6.6 5.6 Z" fill="#f6f6f6" stroke="none"/></svg>
<svg style="left:550px;top:609px" width="113" height="23" viewBox="550 609 113 23"><rect x="550.20" y="609.70" width="112.40" height="21.80" fill="#696969"/></svg>
<span class="t" id="t43" style="left:581.55px;top:612px;font-size:15.6px;color:#f8f8f8;transform:scaleX(0.9888)">Cancel</span>
<svg style="left:673px;top:609px" width="114" height="23" viewBox="673 609 114 23"><rect x="673.80" y="609.70" width="112.40" height="21.80" fill="#2b5cc8"/></svg>
<span class="t" id="t44" style="left:718.80px;top:612px;font-size:15.6px;color:#f8f8f8;transform:scaleX(0.9952)">Ok</span>
</div></body></html>
